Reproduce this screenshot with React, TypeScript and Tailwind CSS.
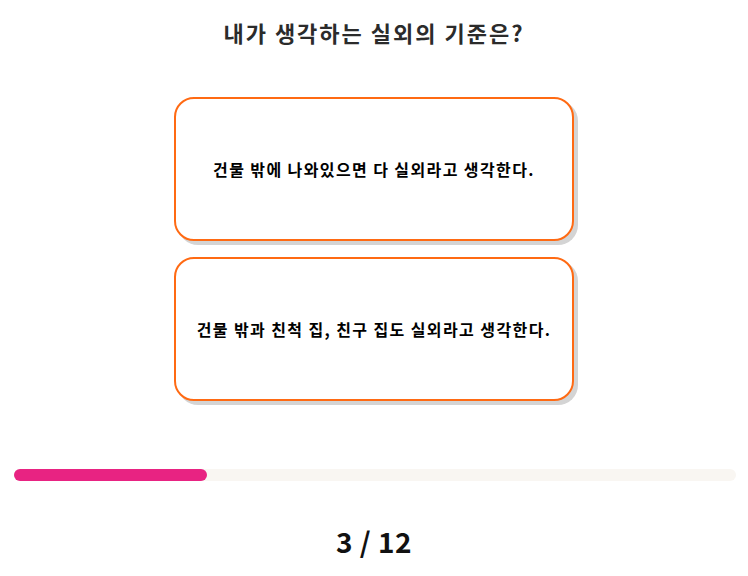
import React from "react";

const font = { fontFamily: '"Noto Sans CJK KR", "Noto Sans", sans-serif' };

function Card({ text }: { text: string }) {
  return (
    <div className="w-[400px] h-[144px] rounded-[20px] border-2 border-[#ff6a13] bg-white shadow-[4px_4px_0_0_#d4d4d4] flex items-center justify-center">
      <span className="text-[16px] font-bold text-black tracking-[1.4px]">{text}</span>
    </div>
  );
}

export default function App() {
  return (
    <div className="w-[748px] h-[576px] bg-white flex flex-col" style={font}>
      <div className="h-[63px] flex items-center justify-center">
        <h1 className="text-[22px] font-bold text-[#2b2b2b] leading-none tracking-[2px]">내가 생각하는 실외의 기준은?</h1>
      </div>
      <div className="mt-[34px] flex flex-col items-center gap-[16px]">
        <Card text="건물 밖에 나와있으면 다 실외라고 생각한다." />
        <Card text="건물 밖과 친척 집, 친구 집도 실외라고 생각한다." />
      </div>
      <div className="mt-[68px] ml-[14px] w-[722px] h-[12px] rounded-full bg-[#f9f6f2]">
        <div className="h-full w-[193px] rounded-full bg-[#e82382]" />
      </div>
      <div className="mt-[40px] h-[40px] flex items-center justify-center">
        <span className="text-[28px] font-bold text-[#111111] leading-none tracking-[0.5px]">3 / 12</span>
      </div>
    </div>
  );
}
